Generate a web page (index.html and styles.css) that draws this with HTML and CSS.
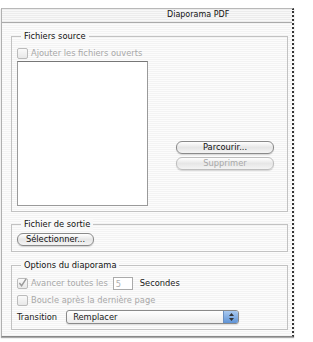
FILE: index.html
```html
<!DOCTYPE html>
<html>
<head>
<meta charset="utf-8">
<link rel="stylesheet" href="styles.css">
</head>
<body>
<div class="window">
  <div class="titlebar"><span class="title">Diaporama PDF</span></div>
  <div class="content">
    <div class="group group-source">
      <div class="legend">Fichiers source</div>
      <div class="check-row disabled"><span class="cb"></span><span>Ajouter les fichiers ouverts</span></div>
      <div class="source-row">
        <div class="listbox"></div>
        <div class="side-buttons">
          <div class="btn">Parcourir...</div>
          <div class="btn disabled">Supprimer</div>
        </div>
      </div>
    </div>
    <div class="group group-out">
      <div class="legend">Fichier de sortie</div>
      <div class="btn btn-select">Sélectionner...</div>
    </div>
    <div class="group group-opts">
      <div class="legend">Options du diaporama</div>
      <div class="check-row"><span class="cb checked disabled-cb"><svg width="10" height="10" viewBox="0 0 10 10"><path d="M1.5 5 L4 8 L9 0.5" fill="none" stroke="#9a9a9a" stroke-width="1.6"/></svg></span><span class="dim">Avancer toutes les</span><span class="field">5</span><span class="secs">Secondes</span></div>
      <div class="check-row disabled"><span class="cb"></span><span>Boucle après la dernière page</span></div>
      <div class="trans-row"><span class="label">Transition</span><div class="popup"><span>Remplacer</span><span class="arrows"><svg width="9" height="12" viewBox="0 0 9 12"><path d="M4.5 2 L7 5 L2 5 Z M4.5 10 L7 7 L2 7 Z" fill="#333"/></svg></span></div></div>
    </div>
  </div>
</div>
</body>
</html>
```
FILE: styles.css
```css
html, body { margin: 0; padding: 0; background: #fff; }
body {
  font-family: "DejaVu Sans", sans-serif;
  font-size: 8.3px;
  color: #1a1a1a;
  width: 313px;
  height: 342px;
  overflow: hidden;
}
.window {
  margin: 8px 0 0 1px;
  width: 290px;
  height: 327px;
  border-top: 1px solid #b8b8b8;
  border-left: 1px solid #b0b0b0;
  border-right: 2px dotted #333;
  border-bottom: 1px solid #888;
  box-shadow: 0 1px 1px #aaa;
  background: repeating-linear-gradient(to bottom, #f3f3f3 0, #f3f3f3 1px, #fcfcfc 1px, #fcfcfc 2px);
  display: flex;
  flex-direction: column;
}
.titlebar {
  height: 13px;
  border-bottom: 1px solid #aaa;
  position: relative;
  background: repeating-linear-gradient(to bottom, #ececec 0, #ececec 1px, #f8f8f8 1px, #f8f8f8 2px);
}
.title {
  position: absolute;
  left: 165px;
  top: 1px;
  font-size: 8px;
  color: #111;
}
.content {
  padding: 13px 4px 0 9px;
  display: flex;
  flex-direction: column;
}
.group {
  border: 1px solid #c2c2c2;
  position: relative;
  padding: 9px 5px 5px 5px;
}
.legend {
  position: absolute;
  top: -6px;
  left: 9px;
  padding: 0 3px;
  background: #f8f8f8;
  line-height: 11px;
  color: #111;
}
.check-row {
  display: flex;
  align-items: center;
  height: 14px;
}
.cb {
  width: 11px;
  height: 11px;
  border: 1px solid #bbb;
  border-radius: 2px;
  background: linear-gradient(#fafafa, #e8e8e8);
  margin-right: 3px;
  box-sizing: border-box;
  display: flex;
  align-items: center;
  justify-content: center;
}
.check-row.disabled { color: #a8a8a8; }
.dim { color: #a8a8a8; }
.source-row {
  display: flex;
  margin-top: 1px;
}
.listbox {
  width: 129px;
  height: 143px;
  background: #fff;
  border: 1px solid #9a9a9a;
  border-top-color: #777;
}
.side-buttons {
  display: flex;
  flex-direction: column;
  gap: 3px;
  margin-left: 28px;
  margin-top: 80px;
}
.btn {
  width: 96px;
  height: 11px;
  border: 1px solid #8a8a8a;
  border-radius: 6px;
  background: linear-gradient(#ffffff, #e6e6e6 50%, #f4f4f4);
  text-align: center;
  line-height: 11px;
  color: #111;
  box-shadow: 0 1px 1px rgba(0,0,0,0.15);
}
.btn.disabled { color: #a8a8a8; border-color: #bdbdbd; }
.group-out {
  margin-top: 12px;
  padding: 8px 5px 5px 5px;
}
.btn-select { width: 75px; }
.group-opts {
  margin-top: 13px;
  padding: 10px 5px 5px 5px;
}
.field {
  width: 20px;
  height: 13px;
  background: #fff;
  border: 1px solid #aaa;
  margin-left: 5px;
  color: #b0b0b0;
  line-height: 13px;
  padding-left: 2px;
  box-sizing: border-box;
}
.secs { margin-left: 7px; }
.check-row + .check-row { margin-top: 3px; }
.trans-row {
  display: flex;
  align-items: center;
  margin-top: 3px;
  height: 14px;
}
.label { margin-right: 9px; }
.popup {
  width: 165px;
  height: 12px;
  border: 1px solid #8a8a8a;
  border-radius: 3px;
  background: linear-gradient(#ffffff, #ececec);
  display: flex;
  align-items: center;
  justify-content: space-between;
  padding-left: 6px;
  box-sizing: content-box;
  box-shadow: 0 1px 1px rgba(0,0,0,0.12);
}
.arrows {
  width: 14px;
  height: 12px;
  background: linear-gradient(#a9c9f0, #5f93d6);
  border-left: 1px solid #6a8fc0;
  border-radius: 0 2px 2px 0;
  display: flex;
  align-items: center;
  justify-content: center;
}
```
